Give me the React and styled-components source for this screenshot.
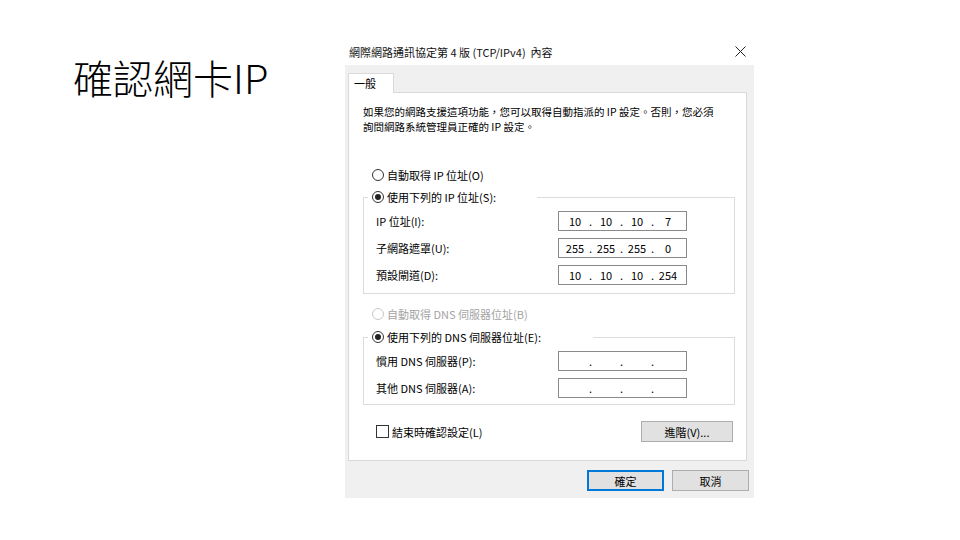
import React from 'react'
import styled, { createGlobalStyle } from 'styled-components'

const GlobalStyle = createGlobalStyle`
    body {
        margin: 0;
        background: #ffffff;
        font-family: "Noto Sans CJK TC", "Liberation Sans", sans-serif;
        color: #000;
    }
`
const Page = styled.div`
    width: 960px;
    height: 540px;
    display: flex;
    align-items: flex-start;
    overflow: hidden;
`
const Headline = styled.h1`
    margin: 53px 0 0 73px;
    width: 272px;
    font-size: 40px;
    line-height: 48px;
    font-weight: 300;
    font-family: "Noto Sans CJK TC", sans-serif;
`
const Dialog = styled.div`
    margin-top: 38px;
    width: 409px;
    display: flex;
    flex-direction: column;
    font-size: 11px;
`
const TitleBar = styled.div`
    height: 27px;
    display: flex;
    align-items: center;
    justify-content: space-between;
    padding: 0 8px 0 4px;
    font-size: 11px;
    color: #111;
`
const Body = styled.div`
    background: #f0f0f0;
    padding: 8px 5px 7px 3px;
`
const TabStrip = styled.div`
    display: flex;
`
const Tab = styled.div`
    position: relative;
    z-index: 1;
    box-sizing: border-box;
    width: 46px;
    height: 20px;
    margin-bottom: -1px;
    padding-left: 5px;
    line-height: 18px;
    background: #fff;
    border: 1px solid #d9d9d9;
    border-bottom: none;
`
const Panel = styled.div`
    box-sizing: border-box;
    height: 369px;
    margin-right: 2px;
    background: #fff;
    border: 1px solid #d9d9d9;
    padding: 11px 11px 0 14px;
    display: flex;
    flex-direction: column;
`
const Description = styled.p`
    margin: 0;
    font-size: 10.5px;
    line-height: 15px;
`
const RadioRow = styled.div`
    display: flex;
    align-items: center;
    gap: 3px;
    height: 16px;
    padding-left: 9px;
    margin-top: ${({ top }) => top}px;
    color: ${({ disabled }) => (disabled ? '#a3a3a3' : '#000')};
`
const RadioCircle = styled.span`
    box-sizing: border-box;
    width: 12px;
    height: 12px;
    border-radius: 50%;
    border: 1px solid ${({ disabled }) => (disabled ? '#c8c8c8' : '#333')};
    display: flex;
    align-items: center;
    justify-content: center;
    &::after {
        content: '';
        width: 6px;
        height: 6px;
        border-radius: 50%;
        background: ${({ checked }) => (checked ? '#222' : 'transparent')};
    }
`
const Group = styled.fieldset`
    margin: ${({ top }) => top}px 0 0 0;
    padding: 6px 47px ${({ bottom }) => bottom}px 12px;
    border: 1px solid #dcdcdc;
    display: flex;
    flex-direction: column;
    gap: 7px;
`
const Legend = styled.legend`
    box-sizing: border-box;
    width: ${({ width }) => width}px;
    margin-left: -8px;
    padding: 0 0 0 4px;
    height: 16px;
    display: flex;
    align-items: center;
    gap: 3px;
`
const FieldRow = styled.div`
    display: flex;
    align-items: center;
    justify-content: space-between;
    height: 20px;
`
const IpBox = styled.div`
    box-sizing: border-box;
    width: 129px;
    height: 20px;
    border: 1px solid #8a8a8a;
    padding-left: 4px;
    display: flex;
    align-items: center;
    font-size: 11px;
`
const Octet = styled.span`
    width: 24px;
    text-align: center;
`
const Dot = styled.span`
    width: 7px;
    text-align: center;
`
const CheckRow = styled.div`
    margin-top: 16px;
    display: flex;
    align-items: center;
    justify-content: space-between;
    padding: 0 2px 0 13px;
`
const CheckLabel = styled.label`
    display: flex;
    align-items: center;
    gap: 3px;
`
const CheckBox = styled.span`
    box-sizing: border-box;
    width: 13px;
    height: 13px;
    border: 1px solid #333;
`
const Button = styled.div`
    box-sizing: border-box;
    width: ${({ width }) => width}px;
    height: 21px;
    display: flex;
    align-items: center;
    justify-content: center;
    background: #e1e1e1;
    border: 1px solid ${({ primary }) => (primary ? '#0078d7' : '#adadad')};
    box-shadow: ${({ primary }) => (primary ? 'inset 0 0 0 1px #0078d7' : 'none')};
`
const Footer = styled.div`
    margin-top: 9px;
    display: flex;
    justify-content: flex-end;
    gap: 8px;
`

const IpField = ({ value }) => {
    const parts = value ? value.split('.') : ['', '', '', '']
    return (
        <IpBox>
            {parts.map((p, i) => (
                <React.Fragment key={i}>
                    {i > 0 && <Dot>.</Dot>}
                    <Octet>{p}</Octet>
                </React.Fragment>
            ))}
        </IpBox>
    )
}

const CloseIcon = () => (
    <svg width="11" height="11" viewBox="0 0 11 11">
        <path d="M0.5 0.5 L10.5 10.5 M10.5 0.5 L0.5 10.5" stroke="#222" strokeWidth="1" fill="none" />
    </svg>
)

const App = () => {
    return (
        <Page>
            <GlobalStyle />
            <Headline>確認網卡IP</Headline>

            <Dialog>
                <TitleBar>
                    <span>網際網路通訊協定第 4 版 (TCP/IPv4)&nbsp;&nbsp;內容</span>
                    <CloseIcon />
                </TitleBar>

                <Body>
                    <TabStrip>
                        <Tab>一般</Tab>
                    </TabStrip>

                    <Panel>
                        <Description>
                            如果您的網路支援這項功能，您可以取得自動指派的 IP 設定。否則，您必須
                            <br />
                            詢問網路系統管理員正確的 IP 設定。
                        </Description>

                        <RadioRow top={33}>
                            <RadioCircle />
                            自動取得 IP 位址(O)
                        </RadioRow>

                        <Group top={6} bottom={8}>
                            <Legend width={169}>
                                <RadioCircle checked />
                                使用下列的 IP 位址(S):
                            </Legend>
                            <FieldRow>
                                IP 位址(I):
                                <IpField value="10.10.10.7" />
                            </FieldRow>
                            <FieldRow>
                                子網路遮罩(U):
                                <IpField value="255.255.255.0" />
                            </FieldRow>
                            <FieldRow>
                                預設閘道(D):
                                <IpField value="10.10.10.254" />
                            </FieldRow>
                        </Group>

                        <RadioRow top={12} disabled>
                            <RadioCircle disabled />
                            自動取得 DNS 伺服器位址(B)
                        </RadioRow>

                        <Group top={7} bottom={6}>
                            <Legend width={225}>
                                <RadioCircle checked />
                                使用下列的 DNS 伺服器位址(E):
                            </Legend>
                            <FieldRow>
                                慣用 DNS 伺服器(P):
                                <IpField />
                            </FieldRow>
                            <FieldRow>
                                其他 DNS 伺服器(A):
                                <IpField />
                            </FieldRow>
                        </Group>

                        <CheckRow>
                            <CheckLabel>
                                <CheckBox />
                                結束時確認設定(L)
                            </CheckLabel>
                            <Button width={92}>進階(V)...</Button>
                        </CheckRow>
                    </Panel>

                    <Footer>
                        <Button width={77} primary>確定</Button>
                        <Button width={77}>取消</Button>
                    </Footer>
                </Body>
            </Dialog>
        </Page>
    )
}

export default App
